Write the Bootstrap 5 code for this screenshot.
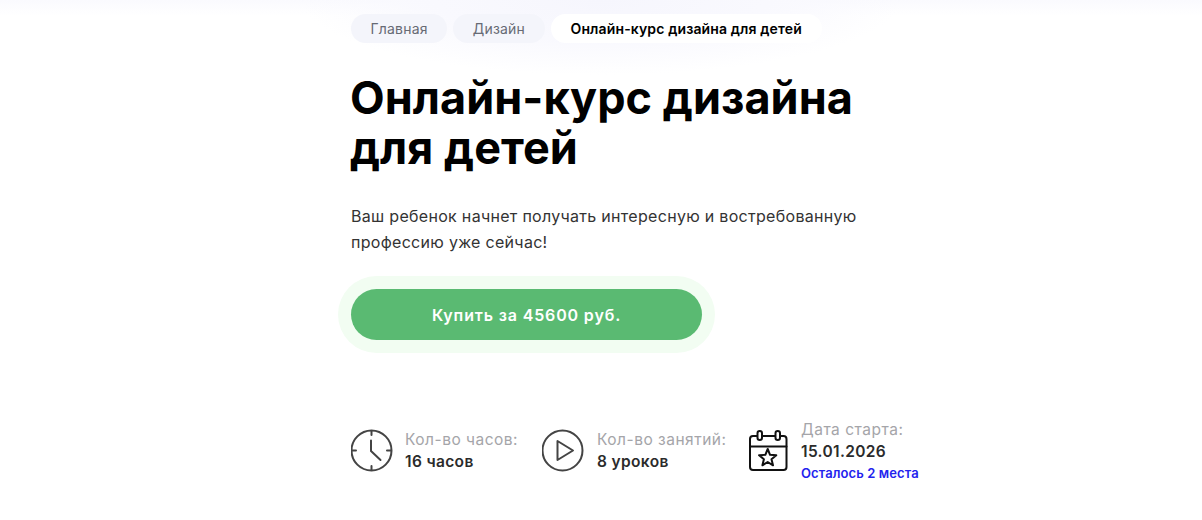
<!DOCTYPE html>
<html lang="ru">
<head>
    <meta charset="UTF-8">
    <meta name="viewport" content="width=device-width, initial-scale=1.0">
    <title>Онлайн-курс дизайна для детей</title>
    <link href="https://cdn.jsdelivr.net/npm/bootstrap@5.3.0/dist/css/bootstrap.min.css" rel="stylesheet">
    <style>
        body {
            font-family: Inter, "Noto Sans", sans-serif;
            background: #fff;
            color: #000;
            height: 520px;
            overflow: hidden;
        }
        .top-glow {
            background: radial-gradient(ellipse 300px 75px at 50% 0, #f6f6fd 0, #f9f9fe 55%, rgba(255, 255, 255, 0) 100%),
                linear-gradient(#fafafe 0, #fff 16px);
        }
        .course-col {
            width: 500px;
            padding-top: 14px;
        }
        .crumb-row {
            gap: 6px;
        }
        .crumb {
            height: 29px;
            padding: 0 19.5px;
            border-radius: 15px;
            background: #f4f5fb;
            color: #676a74;
            font-size: 14px;
            letter-spacing: .2px;
            line-height: 29px;
            text-decoration: none;
            white-space: nowrap;
        }
        .crumb-active {
            padding: 0 20px;
            background: #fff;
            color: #000;
            font-weight: 600;
            font-size: 14px;
            letter-spacing: .13px;
        }
        .course-title {
            font-size: 45px;
            font-weight: 700;
            letter-spacing: .05px;
            line-height: 50px;
            margin: 30px 0 0 -1px;
            white-space: nowrap;
        }
        .course-lead {
            font-size: 16px;
            letter-spacing: .3px;
            line-height: 26px;
            color: #333;
            margin: 30px 0 0;
            white-space: nowrap;
        }
        .buy-btn {
            width: 351px;
            height: 51px;
            margin-top: 34px;
            border: 0;
            border-radius: 26px;
            background: #5aba72;
            box-shadow: 0 0 0 13px #f2fdf2;
            color: #fff;
            font-size: 16px;
            font-weight: 600;
            letter-spacing: .85px;
        }
        .stats {
            margin-top: 79px;
        }
        .stat {
            flex: none;
        }
        .stat-hours {
            width: 191px;
            gap: 10px;
        }
        .stat-lessons {
            width: 206px;
            gap: 11px;
        }
        .stat-start {
            gap: 9px;
        }
        .stat-label {
            color: #a5a5a9;
            font-size: 15.5px;
            letter-spacing: .5px;
            line-height: 22px;
            white-space: nowrap;
        }
        .stat-value {
            color: #2b2b2b;
            font-size: 15.5px;
            font-weight: 600;
            letter-spacing: .35px;
            line-height: 22px;
            white-space: nowrap;
        }
        .stat-note {
            color: #2323ee;
            font-size: 13px;
            font-weight: 600;
            letter-spacing: .1px;
            line-height: 20px;
            white-space: nowrap;
        }
        .stat-icon {
            flex: none;
        }
    </style>
</head>
<body>
    <div class="top-glow">
        <div class="course-col mx-auto">
            <nav class="crumb-row d-flex" aria-label="breadcrumb">
                <a class="crumb" href="#">Главная</a>
                <a class="crumb" href="#">Дизайн</a>
                <span class="crumb crumb-active">Онлайн-курс дизайна для детей</span>
            </nav>
            <h1 class="course-title">Онлайн-курс дизайна<br>для детей</h1>
            <p class="course-lead">Ваш ребенок начнет получать интересную и востребованную<br>профессию уже сейчас!</p>
            <button type="button" class="btn buy-btn d-block">Купить за 45600 руб.</button>
            <div class="stats d-flex align-items-center">
                <div class="stat stat-hours d-flex align-items-center">
                    <svg class="stat-icon" width="44" height="44" viewBox="0 0 44 44" fill="none" stroke="#444" stroke-width="2" stroke-linecap="round" stroke-linejoin="round">
                        <circle cx="20.5" cy="21.5" r="20"/>
                        <path d="M20.5 2v4M20.5 37v4M1 21.500h4M36 21.500h4M20 11.500v10.500l9.500 9"/>
                    </svg>
                    <div>
                        <div class="stat-label">Кол-во часов:</div>
                        <div class="stat-value">16 часов</div>
                    </div>
                </div>
                <div class="stat stat-lessons d-flex align-items-center">
                    <svg class="stat-icon" width="44" height="44" viewBox="0 0 44 44" fill="none" stroke="#444" stroke-width="2" stroke-linejoin="round">
                        <circle cx="20.5" cy="21.5" r="20"/>
                        <path d="M15.500 12v19L31 21.500z"/>
                    </svg>
                    <div>
                        <div class="stat-label">Кол-во занятий:</div>
                        <div class="stat-value">8 уроков</div>
                    </div>
                </div>
                <div class="stat stat-start d-flex align-items-center">
                    <svg class="stat-icon" width="44" height="44" viewBox="0 0 44 44" fill="none" stroke="#111" stroke-width="2" stroke-linejoin="round" stroke-linecap="round">
                        <rect x="2" y="7" width="36.500" height="34" rx="3"/>
                        <path d="M2 17.500h36.500"/>
                        <rect x="9.500" y="2" width="4.500" height="9" rx="2.200" fill="#fff"/>
                        <rect x="27.500" y="2" width="4.500" height="9" rx="2.200" fill="#fff"/>
                        <path d="M19.700 20l2.350 5.800 6.250.4-4.800 4 1.500 6.100-5.300-3.300-5.300 3.300 1.500-6.100-4.800-4 6.250-.4z"/>
                    </svg>
                    <div>
                        <div class="stat-label">Дата старта:</div>
                        <div class="stat-value">15.01.2026</div>
                        <div class="stat-note">Осталось 2 места</div>
                    </div>
                </div>
            </div>
        </div>
    </div>
    <script src="https://cdn.jsdelivr.net/npm/bootstrap@5.3.0/dist/js/bootstrap.bundle.min.js"></script>
</body>
</html>
